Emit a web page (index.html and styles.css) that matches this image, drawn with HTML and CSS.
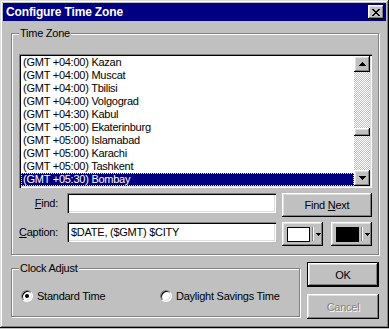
FILE: index.html
```html
<!DOCTYPE html>
<html lang="en">
<head>
<meta charset="UTF-8">
<title>Configure Time Zone</title>
<link rel="stylesheet" href="styles.css">
</head>
<body>
<div class="window">
  <div class="titlebar">
    <span class="title">Configure Time Zone</span>
    <button class="raised close-btn" title="Close">
      <svg width="8" height="7" viewBox="0 0 8 7" shape-rendering="crispEdges"><path d="M0 0h2v1H0zM6 0h2v1H6zM1 1h2v1H1zM5 1h2v1H5zM2 2h4v1H2zM3 3h2v1H3zM2 4h4v1H2zM1 5h2v1H1zM5 5h2v1H5zM0 6h2v1H0zM6 6h2v1H6z" fill="#000"/></svg>
    </button>
  </div>

  <div class="group group-zone">
    <span class="group-label">Time Zone</span>
    <div class="listbox">
      <ul class="zone-list">
        <li>(GMT +04:00) Kazan</li>
        <li>(GMT +04:00) Muscat</li>
        <li>(GMT +04:00) Tbilisi</li>
        <li>(GMT +04:00) Volgograd</li>
        <li>(GMT +04:30) Kabul</li>
        <li>(GMT +05:00) Ekaterinburg</li>
        <li>(GMT +05:00) Islamabad</li>
        <li>(GMT +05:00) Karachi</li>
        <li>(GMT +05:00) Tashkent</li>
        <li class="selected">(GMT +05:30) Bombay</li>
      </ul>
      <div class="scrollbar">
        <div class="raised sb-btn">
          <svg width="7" height="4" viewBox="0 0 7 4" shape-rendering="crispEdges"><path d="M3 0h1v1h1v1h1v1h1v1H0V3h1V2h1V1h1z" fill="#000"/></svg>
        </div>
        <div class="sb-track"><div class="raised sb-thumb"></div></div>
        <div class="raised sb-btn">
          <svg width="7" height="4" viewBox="0 0 7 4" shape-rendering="crispEdges"><path d="M0 0h7v1H6v1H5v1H4v1H3V3H2V2H1V1H0z" fill="#000"/></svg>
        </div>
      </div>
    </div>

    <div class="field-row">
      <label class="field-label" for="find"><u>F</u>ind:</label>
      <input class="textbox" id="find" type="text" value="">
      <button class="raised btn find-btn"><span>Find <u>N</u>ext</span></button>
    </div>

    <div class="field-row">
      <label class="field-label" for="caption"><u>C</u>aption:</label>
      <input class="textbox" id="caption" type="text" value="$DATE, ($GMT) $CITY">
      <div class="color-btns">
        <button class="raised color-btn">
          <span class="swatch swatch-white"></span>
          <span class="sep"></span>
          <svg width="5" height="3" viewBox="0 0 5 3" shape-rendering="crispEdges"><path d="M0 0h5v1H4v1H3v1H2V2H1V1H0z" fill="#000"/></svg>
        </button>
        <button class="raised color-btn">
          <span class="swatch swatch-black"></span>
          <span class="sep"></span>
          <svg width="5" height="3" viewBox="0 0 5 3" shape-rendering="crispEdges"><path d="M0 0h5v1H4v1H3v1H2V2H1V1H0z" fill="#000"/></svg>
        </button>
      </div>
    </div>
  </div>

  <div class="bottom">
    <div class="group group-clock">
      <span class="group-label">Clock Adjust</span>
      <div class="radios">
        <label class="option option-first"><span class="radio checked"></span>Standard Time</label>
        <label class="option"><span class="radio"></span>Daylight Savings Time</label>
      </div>
    </div>
    <div class="actions">
      <button class="raised btn default-btn">OK</button>
      <button class="raised btn" disabled>Cancel</button>
    </div>
  </div>
</div>
</body>
</html>
```

FILE: styles.css
```css
html, body {
  margin: 0;
  background: #c0c0c0;
}
body {
  font-family: "Liberation Sans", Arial, sans-serif;
  font-size: 11px;
  letter-spacing: -0.25px;
  color: #000;
}
button, input {
  font: inherit;
  letter-spacing: inherit;
  color: inherit;
  margin: 0;
  padding: 0;
  border: none;
  outline: none;
}
.window {
  width: 389px;
  height: 328px;
  box-sizing: border-box;
  padding: 3px;
  background: #c0c0c0;
  box-shadow: inset -1px -1px #000, inset 1px 1px #dfdfdf, inset -2px -2px #808080, inset 2px 2px #fff;
}
/* 3D raised look shared by buttons */
.raised {
  background: #c0c0c0;
  box-shadow: inset -1px -1px #000, inset 1px 1px #fff, inset -2px -2px #808080, inset 2px 2px #dfdfdf;
}
.titlebar {
  height: 18px;
  background: #000080;
  display: flex;
  align-items: center;
  justify-content: space-between;
  padding: 0 2px 0 3px;
}
.title {
  color: #fff;
  font-weight: bold;
  font-size: 12px;
  letter-spacing: -0.15px;
}
.close-btn {
  width: 16px;
  height: 14px;
  display: flex;
  align-items: center;
  justify-content: center;
}
.group {
  position: relative;
  border: 1px solid #808080;
  box-shadow: inset 1px 1px #fff, 1px 1px #fff;
}
.group-label {
  position: absolute;
  top: -7px;
  left: 7px;
  padding: 0 1px;
  line-height: 13px;
  background: #c0c0c0;
}
.group-zone {
  margin: 12px 7px 0 8px;
  padding: 20px 6px 8px 7px;
}
.listbox {
  width: 353px;
  height: 134px;
  box-sizing: border-box;
  padding: 2px;
  display: flex;
  background: #fff;
  box-shadow: inset 1px 1px #808080, inset 2px 2px #000, inset -1px -1px #fff, inset -2px -2px #dfdfdf;
}
.zone-list {
  flex: 1;
  margin: 0;
  padding: 0;
  list-style: none;
}
.zone-list li {
  height: 13px;
  line-height: 13px;
  padding-left: 2px;
  white-space: nowrap;
}
.zone-list li.selected {
  background: #000080;
  color: #fff;
  outline: 1px dotted #e8e8a0;
  outline-offset: -1px;
}
.scrollbar {
  width: 16px;
  display: flex;
  flex-direction: column;
}
.sb-btn {
  height: 16px;
  display: flex;
  align-items: center;
  justify-content: center;
}
.sb-track {
  flex: 1;
  background: repeating-conic-gradient(#c0c0c0 0% 25%, #fff 0% 50%) 0 0 / 2px 2px;
}
.sb-thumb {
  margin-top: 56px;
  height: 8px;
}
.field-row {
  display: flex;
  align-items: flex-start;
  height: 24px;
  margin-top: 5px;
}
.field-label {
  width: 48px;
  box-sizing: border-box;
  padding-right: 9px;
  text-align: right;
  line-height: 20px;
}
.textbox {
  width: 209px;
  height: 20px;
  box-sizing: border-box;
  padding: 0 4px;
  margin-right: 6px;
  background: #fff;
  box-shadow: inset 1px 1px #808080, inset 2px 2px #000, inset -1px -1px #fff, inset -2px -2px #dfdfdf;
}
.btn {
  display: flex;
  align-items: center;
  justify-content: center;
}
.find-btn {
  width: 90px;
  height: 24px;
}
.color-btns {
  display: flex;
  gap: 8px;
}
.color-btn {
  width: 41px;
  height: 24px;
  display: flex;
  align-items: center;
  padding: 0 0 0 5px;
  box-sizing: border-box;
}
.swatch {
  width: 23px;
  height: 15px;
  box-sizing: border-box;
  border: 1px solid #000;
}
.swatch-white { background: #fff; }
.swatch-black { background: #000; }
.sep {
  width: 1px;
  height: 14px;
  margin: 0 1px 0 2px;
  background: #808080;
  border-right: 1px solid #fff;
}
.color-btn svg {
  margin-left: 1px;
}
.bottom {
  display: flex;
  align-items: flex-start;
  margin-top: 7px;
}
.group-clock {
  margin: 6px 0 0 8px;
  width: 289px;
  box-sizing: border-box;
  padding: 20px 0 14px 9px;
}
.radios {
  display: flex;
  align-items: center;
  height: 13px;
}
.option {
  display: flex;
  align-items: center;
  gap: 4px;
}
.option-first {
  width: 139px;
}
.radio {
  width: 12px;
  height: 12px;
  box-sizing: border-box;
  border-radius: 50%;
  border: 1px solid;
  border-color: #808080 #fff #fff #808080;
  background: #fff;
  box-shadow: inset 1px 1px #000, inset -1px -1px #dfdfdf;
  display: flex;
  align-items: center;
  justify-content: center;
}
.radio.checked::after {
  content: "";
  width: 4px;
  height: 4px;
  border-radius: 50%;
  background: #000;
}
.actions {
  margin-left: 7px;
  display: flex;
  flex-direction: column;
  gap: 7px;
}
.actions .btn {
  width: 72px;
  height: 25px;
  box-sizing: border-box;
}
.default-btn {
  border: 1px solid #000;
}
.btn:disabled {
  color: #808080;
  text-shadow: 1px 1px #fff;
}
```
